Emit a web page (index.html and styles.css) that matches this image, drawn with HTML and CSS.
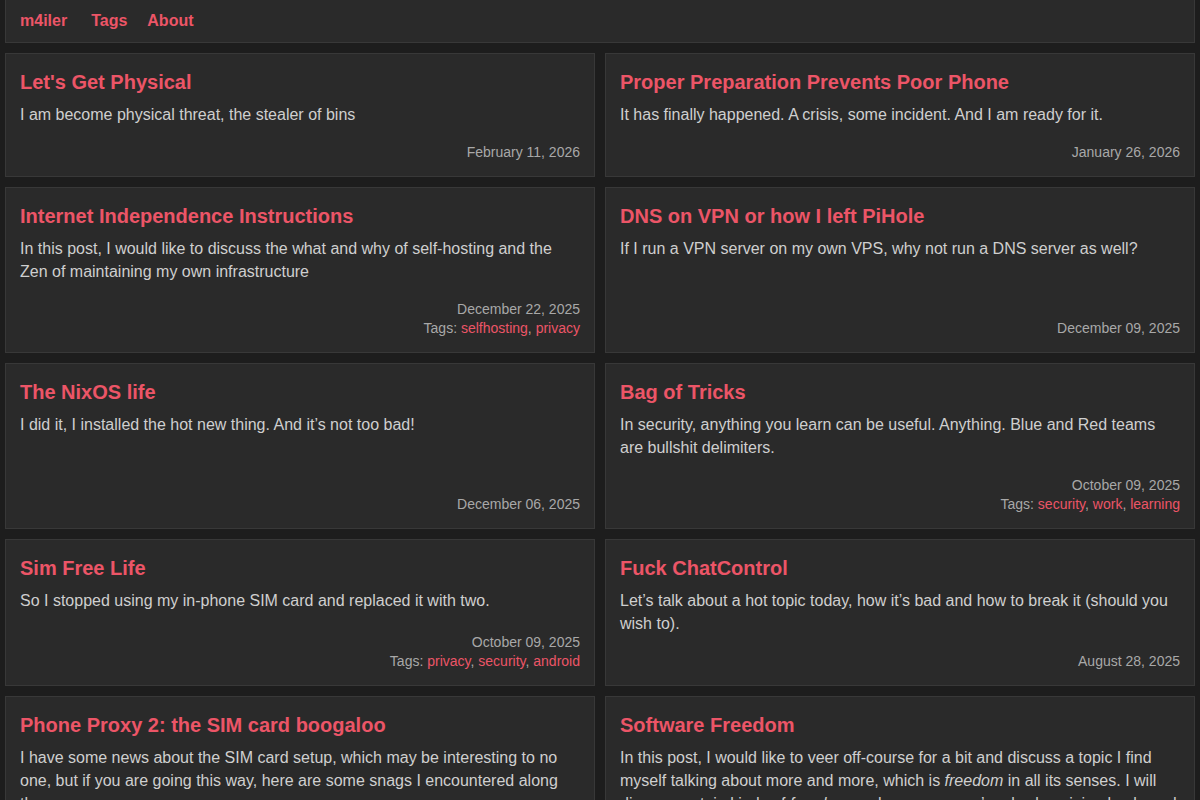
FILE: index.html
```html
<!DOCTYPE html>
<html lang="en">

<head>
  <meta charset="UTF-8">
  <meta name="viewport" content="width=device-width, initial-scale=1.0">
  <title>m4iler</title>
  <link rel="stylesheet" href="styles.css">
</head>

<body>
  <header class="site-header">
    <a class="brand" href="#">m4iler</a>
    <a href="#">Tags</a>
    <a href="#">About</a>
  </header>

  <main class="posts">
    <article class="post">
      <h2><a href="#">Let's Get Physical</a></h2>
      <p class="summary">I am become physical threat, the stealer of bins</p>
      <div class="meta">
        <div class="date">February 11, 2026</div>
      </div>
    </article>

    <article class="post">
      <h2><a href="#">Proper Preparation Prevents Poor Phone</a></h2>
      <p class="summary">It has finally happened. A crisis, some incident. And I am ready for it.</p>
      <div class="meta">
        <div class="date">January 26, 2026</div>
      </div>
    </article>

    <article class="post">
      <h2><a href="#">Internet Independence Instructions</a></h2>
      <p class="summary">In this post, I would like to discuss the what and why of self-hosting and the Zen of maintaining my own infrastructure</p>
      <div class="meta">
        <div class="date">December 22, 2025</div>
        <div class="tags">Tags: <a href="#">selfhosting</a>, <a href="#">privacy</a></div>
      </div>
    </article>

    <article class="post">
      <h2><a href="#">DNS on VPN or how I left PiHole</a></h2>
      <p class="summary">If I run a VPN server on my own VPS, why not run a DNS server as well?</p>
      <div class="meta">
        <div class="date">December 09, 2025</div>
      </div>
    </article>

    <article class="post">
      <h2><a href="#">The NixOS life</a></h2>
      <p class="summary">I did it, I installed the hot new thing. And it’s not too bad!</p>
      <div class="meta">
        <div class="date">December 06, 2025</div>
      </div>
    </article>

    <article class="post">
      <h2><a href="#">Bag of Tricks</a></h2>
      <p class="summary">In security, anything you learn can be useful. Anything. Blue and Red teams are bullshit delimiters.</p>
      <div class="meta">
        <div class="date">October 09, 2025</div>
        <div class="tags">Tags: <a href="#">security</a>, <a href="#">work</a>, <a href="#">learning</a></div>
      </div>
    </article>

    <article class="post">
      <h2><a href="#">Sim Free Life</a></h2>
      <p class="summary">So I stopped using my in-phone SIM card and replaced it with two.</p>
      <div class="meta">
        <div class="date">October 09, 2025</div>
        <div class="tags">Tags: <a href="#">privacy</a>, <a href="#">security</a>, <a href="#">android</a></div>
      </div>
    </article>

    <article class="post">
      <h2><a href="#">Fuck ChatControl</a></h2>
      <p class="summary">Let’s talk about a hot topic today, how it’s bad and how to break it (should you wish to).</p>
      <div class="meta">
        <div class="date">August 28, 2025</div>
      </div>
    </article>

    <article class="post">
      <h2><a href="#">Phone Proxy 2: the SIM card boogaloo</a></h2>
      <p class="summary">I have some news about the SIM card setup, which may be interesting to no one, but if you are going this way, here are some snags I encountered along the way.</p>
      <div class="meta">
        <div class="date">August 14, 2025</div>
        <div class="tags">Tags: <a href="#">android</a>, <a href="#">privacy</a></div>
      </div>
    </article>

    <article class="post">
      <h2><a href="#">Software Freedom</a></h2>
      <p class="summary">In this post, I would like to veer off-course for a bit and discuss a topic I find myself talking about more and more, which is <em>freedom</em> in all its senses. I will discuss certain kinds of <em>freedom</em> we have, <em>ones</em> we’re slowly gaining back, and ones we are losing.</p>
      <div class="meta">
        <div class="date">July 30, 2025</div>
      </div>
    </article>
  </main>
</body>

</html>
```

FILE: styles.css
```css
body {
  background-color: #1d1d1d;
  font-family: "Liberation Sans", Arial, sans-serif;
  color: #cfcfcf;
  margin: 0;
  padding: 0 5px 5px;
}

a {
  color: #ec5567;
  text-decoration: none;
}

.site-header {
  display: flex;
  align-items: center;
  height: 43px;
  padding: 1px 14px;
  background-color: #2a2a2a;
  border: 1px solid #383838;
  border-top: none;
  box-sizing: border-box;
  font-weight: bold;
  font-size: 16px;
  gap: 20px;
}

.site-header .brand {
  margin-right: 4px;
}

.posts {
  display: grid;
  grid-template-columns: 1fr 1fr;
  gap: 10px;
  margin-top: 10px;
}

.post {
  display: flex;
  flex-direction: column;
  background-color: #2a2a2a;
  border: 1px solid #383838;
  padding: 14px;
}

.post h2 {
  font-size: 20px;
  line-height: 28px;
  margin: 0 0 7px;
}

.post .summary {
  font-size: 16px;
  line-height: 23px;
  margin: 0 0 17px;
}

.post .meta {
  margin-top: auto;
  text-align: right;
  font-size: 14px;
  line-height: 19px;
  color: #a8a8a8;
}
```
